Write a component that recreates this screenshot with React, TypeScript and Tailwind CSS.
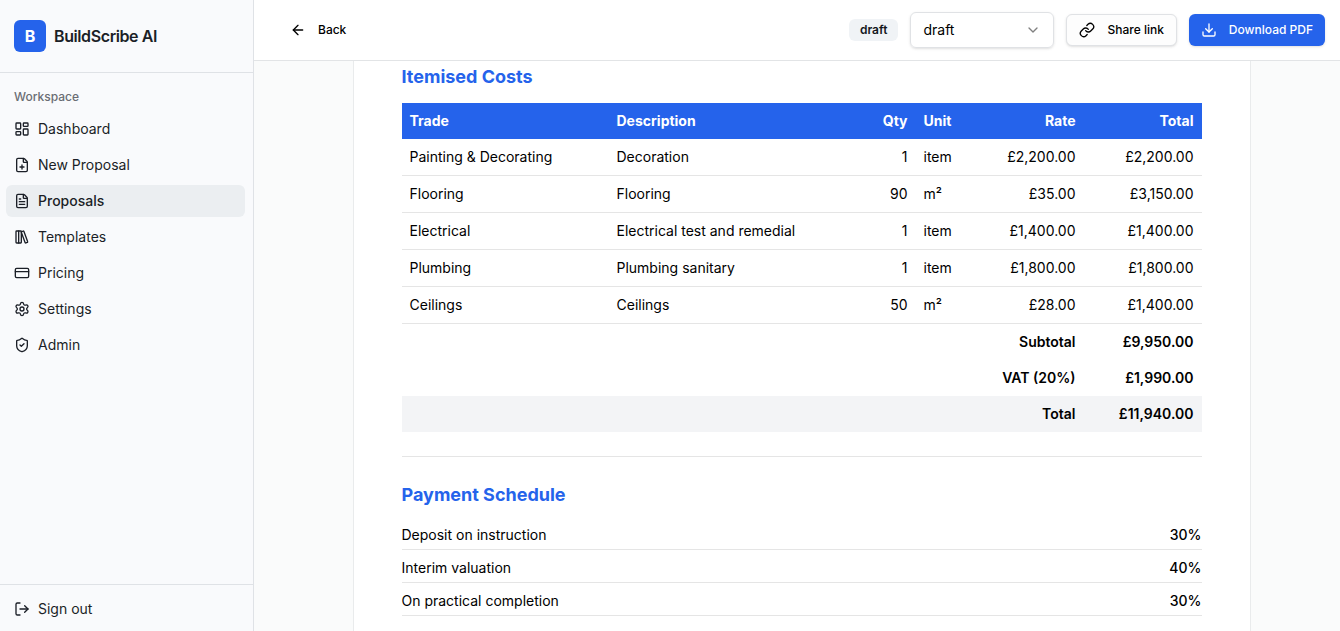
import {
  ArrowLeft,
  ChevronDown,
  CreditCard,
  Download,
  FilePlus,
  FileText,
  LayoutDashboard,
  LogOut,
  Settings,
  ShieldCheck,
  type LucideIcon,
} from "lucide-react";
import { clsx } from "clsx";

type NavItem = { label: string; icon: LucideIcon | typeof LinkIcon };

function LinkIcon({ className }: { className?: string }) {
  return (
    <svg
      viewBox="0 0 24 24"
      fill="none"
      stroke="currentColor"
      strokeWidth={2}
      strokeLinecap="round"
      strokeLinejoin="round"
      className={className}
    >
      <path d="M10 13a5 5 0 0 0 7.54.54l3-3a5 5 0 0 0-7.07-7.07l-1.72 1.71" />
      <path d="M14 11a5 5 0 0 0-7.54-.54l-3 3a5 5 0 0 0 7.07 7.07l1.71-1.71" />
    </svg>
  );
}

function BooksIcon({ className }: { className?: string }) {
  return (
    <svg
      viewBox="0 0 24 24"
      fill="none"
      stroke="currentColor"
      strokeWidth={2}
      strokeLinecap="round"
      strokeLinejoin="round"
      className={className}
    >
      <rect width="8" height="18" x="3" y="3" rx="1" />
      <path d="M7 3v18" />
      <path d="M20.4 18.9c.2.5-.1 1.1-.6 1.3l-1.9.7c-.5.2-1.1-.1-1.3-.6L11.1 5.1c-.2-.5.1-1.1.6-1.3l1.9-.7c.5-.2 1.1.1 1.3.6Z" />
    </svg>
  );
}

const navItems: NavItem[] = [
  { label: "Dashboard", icon: LayoutDashboard },
  { label: "New Proposal", icon: FilePlus },
  { label: "Proposals", icon: FileText },
  { label: "Templates", icon: BooksIcon },
  { label: "Pricing", icon: CreditCard },
  { label: "Settings", icon: Settings },
  { label: "Admin", icon: ShieldCheck },
];

const costs = [
  { trade: "Painting & Decorating", description: "Decoration", qty: 1, unit: "item", rate: "£2,200.00", total: "£2,200.00" },
  { trade: "Flooring", description: "Flooring", qty: 90, unit: "m²", rate: "£35.00", total: "£3,150.00" },
  { trade: "Electrical", description: "Electrical test and remedial", qty: 1, unit: "item", rate: "£1,400.00", total: "£1,400.00" },
  { trade: "Plumbing", description: "Plumbing sanitary", qty: 1, unit: "item", rate: "£1,800.00", total: "£1,800.00" },
  { trade: "Ceilings", description: "Ceilings", qty: 50, unit: "m²", rate: "£28.00", total: "£1,400.00" },
];

const totals = [
  { label: "Subtotal", value: "£9,950.00" },
  { label: "VAT (20%)", value: "£1,990.00" },
  { label: "Total", value: "£11,940.00" },
];

const payments = [
  { label: "Deposit on instruction", percent: 30 },
  { label: "Interim valuation", percent: 40 },
  { label: "On practical completion", percent: 30 },
];

function Sidebar() {
  return (
    <aside className="flex w-[254px] shrink-0 flex-col border-r border-[#dfe2e6] bg-[#f9fafc] text-[#1b1f27]">
      <div className="flex h-[73px] items-center gap-2 border-b border-[#dfe2e6] px-3.5">
        <div className="flex size-8 items-center justify-center rounded-md bg-[#2563eb] text-base font-bold text-white">
          B
        </div>
        <span className="text-base font-semibold tracking-tight">BuildScribe AI</span>
      </div>
      <nav className="flex-1 px-1.5 pt-2">
        <p className="flex h-8 items-center px-2 text-xs font-medium text-[#6a6d73]">Workspace</p>
        <ul className="flex flex-col gap-1">
          {navItems.map(({ label, icon: Icon }) => (
            <li
              key={label}
              className={clsx(
                "flex h-8 w-[239px] items-center gap-2 rounded-md px-2 text-sm",
                label === "Proposals" && "bg-[#ebeef1] font-medium"
              )}
            >
              <Icon className="size-4" />
              {label}
            </li>
          ))}
        </ul>
      </nav>
      <div className="border-t border-[#dfe2e6] px-1.5 pt-2 pb-1.5">
        <button type="button" className="flex h-8 items-center gap-2 px-2 text-sm">
          <LogOut className="size-4" />
          Sign out
        </button>
      </div>
    </aside>
  );
}

function TopBar() {
  return (
    <header className="flex h-[61px] shrink-0 items-center justify-between border-b border-[#e2e4e6] bg-white pr-[15px] pl-6">
      <button type="button" className="flex h-8 items-center gap-3 px-3 text-xs font-medium">
        <ArrowLeft className="size-4" />
        Back
      </button>
      <div className="flex items-center gap-3">
        <span className="flex h-[22px] items-center rounded-md bg-[#f0f3f6] px-[11px] text-xs font-semibold text-[#14171c]">
          draft
        </span>
        <button
          type="button"
          className="flex h-9 w-36 items-center justify-between rounded-md border border-[#e0e2e5] px-3 text-sm shadow-sm"
        >
          draft
          <ChevronDown className="size-4 text-[#808080]" />
        </button>
        <button
          type="button"
          className="flex h-8 items-center gap-3 rounded-md border border-[#e0e2e5] bg-[#fdfdfd] px-3 text-xs font-medium shadow-sm"
        >
          <LinkIcon className="size-4" />
          Share link
        </button>
        <button
          type="button"
          className="flex h-8 items-center gap-3 rounded-md bg-[#2563eb] px-3 text-xs font-medium text-white shadow-sm"
        >
          <Download className="size-4" />
          Download PDF
        </button>
      </div>
    </header>
  );
}

function CostsTable() {
  return (
    <table className="w-full table-fixed text-sm">
      <colgroup>
        <col className="w-[207px]" />
        <col className="w-[240px]" />
        <col className="w-[67px]" />
        <col className="w-[60px]" />
        <col className="w-[108px]" />
        <col className="w-[118px]" />
      </colgroup>
      <thead>
        <tr className="bg-[#2563eb] text-left text-white">
          <th className="p-2">Trade</th>
          <th className="p-2">Description</th>
          <th className="p-2 text-right">Qty</th>
          <th className="p-2">Unit</th>
          <th className="p-2 text-right">Rate</th>
          <th className="p-2 text-right">Total</th>
        </tr>
      </thead>
      <tbody>
        {costs.map((row) => (
          <tr key={row.trade} className="border-b border-[#e5e5e5]">
            <td className="p-2">{row.trade}</td>
            <td className="p-2">{row.description}</td>
            <td className="p-2 text-right">{row.qty}</td>
            <td className="p-2">{row.unit}</td>
            <td className="p-2 text-right">{row.rate}</td>
            <td className="p-2 text-right">{row.total}</td>
          </tr>
        ))}
      </tbody>
      <tfoot>
        {totals.map((row) => (
          <tr key={row.label} className={clsx("font-semibold", row.label === "Total" && "bg-gray-100")}>
            <td colSpan={5} className="p-2 text-right">
              {row.label}
            </td>
            <td className="p-2 text-right">{row.value}</td>
          </tr>
        ))}
      </tfoot>
    </table>
  );
}

export default function App() {
  return (
    <div className="flex h-screen overflow-hidden bg-white font-[Inter,sans-serif] text-black">
      <Sidebar />
      <div className="flex min-w-0 flex-1 flex-col">
        <TopBar />
        <main className="flex min-h-0 flex-1 justify-center overflow-hidden bg-[#fafbfb] pl-[9px]">
          <article className="w-[898px] border-x border-[#e9ebec] bg-white px-12 pt-0.5">
            <section>
              <h2 className="mb-3 text-lg font-bold text-[#2563eb]">Itemised Costs</h2>
              <CostsTable />
            </section>
            <hr className="my-6 border-[#e5e5e5]" />
            <section>
              <h2 className="mb-3 text-lg font-bold text-[#2563eb]">Payment Schedule</h2>
              <ul className="space-y-1 text-sm">
                {payments.map((p) => (
                  <li key={p.label} className="flex justify-between border-b border-[#e5e5e5] py-1">
                    <span>{p.label}</span>
                    <span className="font-medium">{p.percent}%</span>
                  </li>
                ))}
              </ul>
            </section>
          </article>
        </main>
      </div>
    </div>
  );
}
